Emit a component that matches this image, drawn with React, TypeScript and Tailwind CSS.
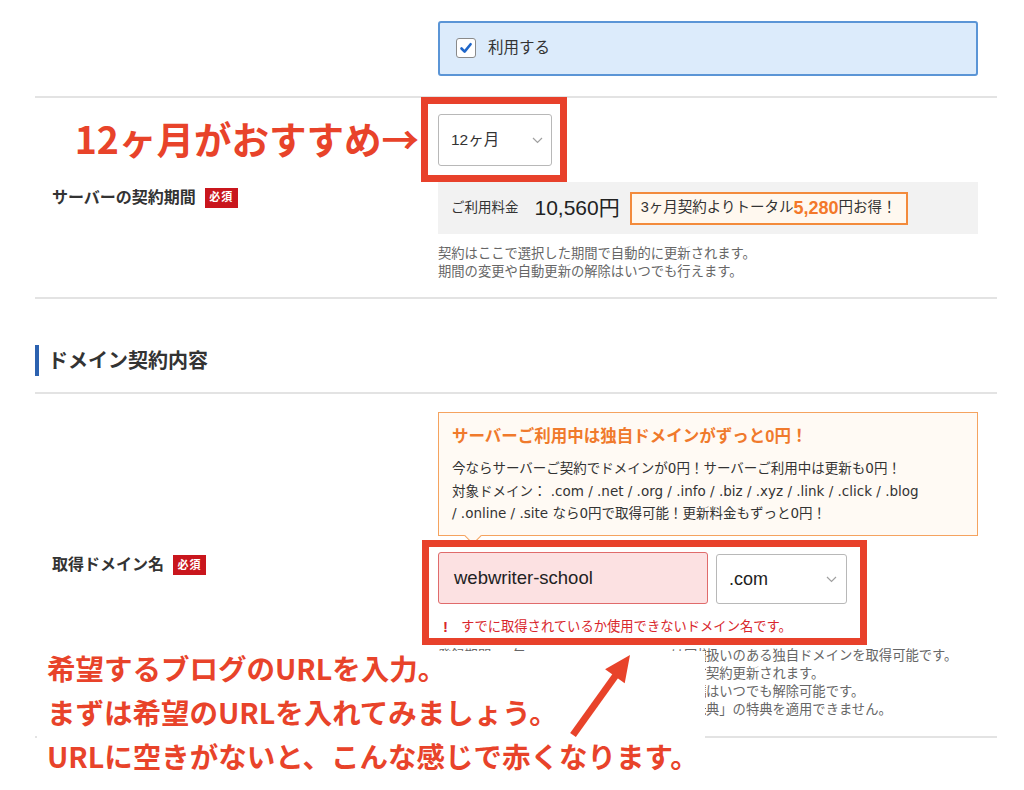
import React from "react";

const RED = "border-[#e8412b]";

function Required() {
  return (
    <span className="ml-[9px] inline-flex h-[20px] w-[33px] items-center justify-center bg-[#c9161d] text-[11px] font-bold tracking-[1px] text-white">
      必須
    </span>
  );
}

function Chevron() {
  return (
    <svg width="11" height="7" viewBox="0 0 11 7" className="text-[#a0a0a0]">
      <polyline points="1,1 5.5,5.5 10,1" fill="none" stroke="currentColor" strokeWidth="1.2" />
    </svg>
  );
}

function Checkbox() {
  return (
    <span className="flex h-[20px] w-[20px] items-center justify-center rounded-[3px] border border-[#8a8a8a] bg-white">
      <svg width="14" height="14" viewBox="0 0 14 14">
        <path d="M2.5 7.5 L5.6 10.6 L11.6 3.2" fill="none" stroke="#1f66c9" strokeWidth="2.6" strokeLinecap="round" strokeLinejoin="round" />
      </svg>
    </span>
  );
}

const hiddenNotes = [
  { head: "登録期間　1年　webwriter-school.com は同様の", tail: "扱いのある独自ドメインを取得可能です。" },
  { head: "取得したドメインはサーバー契約期間中自動で", tail: "契約更新されます。" },
  { head: "独自ドメインの自動更新設定は管理画面から設定", tail: "はいつでも解除可能です。" },
  { head: "他社から移管したドメインは「独自ドメイン永久特", tail: "典」の特典を適用できません。" },
];

export default function App() {
  return (
    <div className="relative h-[790px] w-[1024px] overflow-hidden bg-white font-['Liberation_Sans','Noto_Sans_CJK_JP',sans-serif] text-[#333]">
      <div className="ml-[35px] w-[962px]">
        {/* オプション */}
        <div className="flex h-[98px] items-center border-b-2 border-[#e3e3e3]">
          <div className="w-[403px]" />
          <div className="flex-1 pr-[19px]">
            <label className="flex h-[55px] items-center gap-[12px] rounded-[3px] border-2 border-[#5b95d6] bg-[#dcebfb] pl-[16px] text-[15.5px]">
              <Checkbox />
              利用する
            </label>
          </div>
        </div>

        {/* 契約期間 */}
        <div className="flex border-b-2 border-[#e3e3e3]">
          <div className="flex w-[403px] items-center pl-[17px]">
            <span className="text-[16px] font-bold">サーバーの契約期間</span>
            <Required />
          </div>
          <div className="flex-1 pb-[16px] pr-[19px] pt-[16px]">
            <div className="relative w-[114px]">
              <div className="flex h-[52px] items-center justify-between rounded-[3px] border border-[#b8b8b8] bg-white pl-[12px] pr-[8px] text-[15.5px]">
                12ヶ月
                <Chevron />
              </div>
              <div className={`absolute -left-[17px] -top-[17px] h-[85px] w-[146px] border-[7px] ${RED}`} />
              <div className="absolute right-full top-1/2 mr-[19px] -translate-y-[55%] whitespace-nowrap font-['Noto_Sans_CJK_JP',sans-serif] text-[37.5px] font-bold leading-none text-[#e8432a]">
                12ヶ月がおすすめ→
              </div>
            </div>
            <div className="mt-[16px] flex h-[52px] items-center bg-[#f2f2f2] pl-[13px]">
              <span className="text-[13.5px]">ご利用料金</span>
              <span className="ml-[16px] text-[21px] text-[#222]">10,560円</span>
              <span className="ml-[10px] flex h-[33px] items-center border-2 border-[#f38b3c] bg-[#fff8ef] px-[9px] text-[14.5px]">
                3ヶ月契約よりトータル
                <span className="text-[18px] font-bold text-[#f3782a]">5,280</span>
                円お得！
              </span>
            </div>
            <p className="mt-[11px] text-[13.3px] leading-[18px] text-[#666]">
              契約はここで選択した期間で自動的に更新されます。
              <br />
              期間の変更や自動更新の解除はいつでも行えます。
            </p>
          </div>
        </div>

        {/* 見出し */}
        <div className="flex items-center border-b-2 border-[#e3e3e3] pb-[16px] pt-[46px]">
          <span className="h-[31px] w-[4px] bg-[#2c62b0]" />
          <h2 className="ml-[9px] text-[20px] font-bold text-[#333]">ドメイン契約内容</h2>
        </div>

        {/* 取得ドメイン名 */}
        <div className="flex border-b-2 border-[#e3e3e3]">
          <div className="flex w-[403px] items-center pl-[17px]">
            <span className="text-[16px] font-bold">取得ドメイン名</span>
            <Required />
          </div>
          <div className="flex-1 pb-[17px] pr-[19px] pt-[18px]">
            <div className="relative h-[124px] border-[1.5px] border-[#f5a35f] bg-[#fffaf4] pl-[13px] pt-[12px]">
              <p className="text-[16.5px] font-bold leading-[22px] text-[#f07a2c]">サーバーご利用中は独自ドメインがずっと0円！</p>
              <p className="mt-[10px] font-['DejaVu_Sans','Noto_Sans_CJK_JP',sans-serif] text-[13.5px] leading-[22.5px] text-[#333]">
                今ならサーバーご契約でドメインが0円！サーバーご利用中は更新も0円！
                <br />
                対象ドメイン： .com / .net / .org / .info / .biz / .xyz / .link / .click / .blog
                <br />/ .online / .site なら0円で取得可能！更新料金もずっと0円！
              </p>
              <span className="absolute -bottom-[7px] left-[28px] h-[12px] w-[12px] rotate-45 border-b-[1.5px] border-r-[1.5px] border-[#f5a35f] bg-[#fffaf4]" />
            </div>

            <div className="relative mt-[16px]">
              <div className="flex gap-[8px]">
                <div className="flex h-[52px] w-[270px] items-center rounded-[3px] border border-[#e06b6b] bg-[#fce1e2] pl-[15px] text-[18.5px] text-[#222]">
                  webwriter-school
                </div>
                <div className="mt-[2px] flex h-[50px] w-[131px] items-center justify-between rounded-[3px] border border-[#b8b8b8] bg-white pl-[12px] pr-[9px] text-[18px] text-[#222]">
                  .com
                  <Chevron />
                </div>
              </div>
              <p className="mt-[16px] flex h-[14px] items-center pl-[5px] text-[13.3px] text-[#d8262c]">
                <span className="w-[18px] text-[15px] font-bold">!</span>
                すでに取得されているか使用できないドメイン名です。
              </p>
              <div className={`absolute -left-[16px] -top-[12px] h-[105px] w-[445px] border-[7px] ${RED}`} />
            </div>

            <div className="mt-[13px] text-[13.3px] leading-[18px] text-[#666]">
              {hiddenNotes.map((n) => (
                <div key={n.tail} className="flex whitespace-nowrap">
                  <span className="w-[268px] shrink-0 overflow-hidden">{n.head}</span>
                  <span>{n.tail}</span>
                </div>
              ))}
            </div>
          </div>
        </div>
      </div>

      {/* 注釈 */}
      <div className="absolute left-[37px] top-[651px] h-[139px] w-[668px] bg-white pl-[10px]">
        <div className="-mt-[5px] whitespace-nowrap font-['Noto_Sans_CJK_JP',sans-serif] text-[28.5px] font-bold leading-[44px] text-[#e8432a]">
          <p>希望するブログのURLを入力。</p>
          <p>まずは希望のURLを入れてみましょう。</p>
          <p>URLに空きがないと、こんな感じで赤くなります。</p>
        </div>
      </div>
      <svg className="absolute left-[560px] top-[645px]" width="80" height="100" viewBox="0 0 80 100">
        <line x1="13" y1="90" x2="56" y2="30" stroke="#e8432a" strokeWidth="7" />
        <polygon points="70,10 64.7,38.2 45.1,24.2" fill="#e8432a" />
      </svg>
    </div>
  );
}
